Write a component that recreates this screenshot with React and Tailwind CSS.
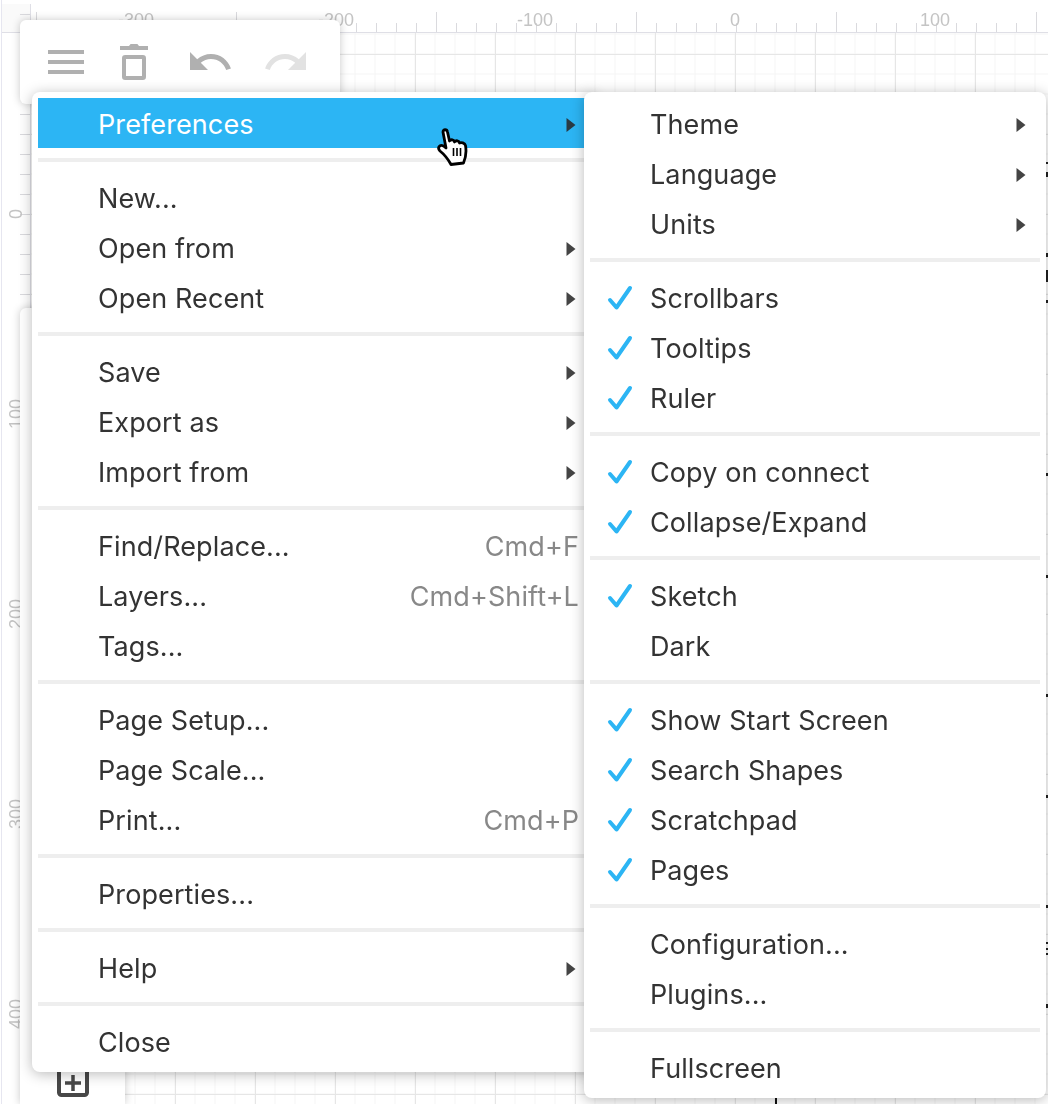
import React from "react";

const leftMenu = [
  [{ label: "Preferences", arrow: true, active: true }],
  [
    { label: "New..." },
    { label: "Open from", arrow: true },
    { label: "Open Recent", arrow: true },
  ],
  [
    { label: "Save", arrow: true },
    { label: "Export as", arrow: true },
    { label: "Import from", arrow: true },
  ],
  [
    { label: "Find/Replace...", shortcut: "Cmd+F" },
    { label: "Layers...", shortcut: "Cmd+Shift+L" },
    { label: "Tags..." },
  ],
  [
    { label: "Page Setup..." },
    { label: "Page Scale..." },
    { label: "Print...", shortcut: "Cmd+P" },
  ],
  [{ label: "Properties..." }],
  [{ label: "Help", arrow: true }],
  [{ label: "Close" }],
];

const rightMenu = [
  [
    { label: "Theme", arrow: true },
    { label: "Language", arrow: true },
    { label: "Units", arrow: true },
  ],
  [
    { label: "Scrollbars", checked: true },
    { label: "Tooltips", checked: true },
    { label: "Ruler", checked: true },
  ],
  [
    { label: "Copy on connect", checked: true },
    { label: "Collapse/Expand", checked: true },
  ],
  [{ label: "Sketch", checked: true }, { label: "Dark" }],
  [
    { label: "Show Start Screen", checked: true },
    { label: "Search Shapes", checked: true },
    { label: "Scratchpad", checked: true },
    { label: "Pages", checked: true },
  ],
  [{ label: "Configuration..." }, { label: "Plugins..." }],
  [{ label: "Fullscreen" }],
];

const range = (from, to, step) => {
  const out = [];
  for (let v = from; v <= to; v += step) out.push(v);
  return out;
};

// rulers and grid behind everything
const Canvas = () => (
  <svg className="absolute inset-0 blur-[0.4px]" width="1048" height="1104">
    {range(35, 1048, 20).map((x) => (
      <line key={"vm" + x} x1={x} x2={x} y1="32" y2="1104" stroke="#f5f5f5" />
    ))}
    {range(34, 1104, 20).map((y) => (
      <line key={"hm" + y} x1="30" x2="1048" y1={y} y2={y} stroke="#f5f5f5" />
    ))}
    {range(95, 1048, 80).map((x) => (
      <line key={"vj" + x} x1={x + 0.5} x2={x + 0.5} y1="32" y2="1104" stroke="#e6e6e6" />
    ))}
    {range(54, 1104, 80).map((y) => (
      <line key={"hj" + y} x1="30" x2="1048" y1={y + 0.5} y2={y + 0.5} stroke="#e6e6e6" />
    ))}
    <rect x="2" y="4" width="28" height="28" fill="#fafafa" />
    <line x1="1.5" x2="1.5" y1="0" y2="1104" stroke="#e6e6f0" />
    <line x1="30.5" x2="30.5" y1="4" y2="1104" stroke="#dfdfe6" />
    <line x1="2" x2="1048" y1="32.5" y2="32.5" stroke="#dfdfe6" />
    {range(36, 1048, 20).map((x) => (
      <line
        key={"tx" + x}
        x1={x + 0.5}
        x2={x + 0.5}
        y1={(x - 36) % 200 === 0 ? 12 : 23}
        y2="32"
        stroke="#dadade"
      />
    ))}
    {range(14, 1104, 20).map((y) => (
      <line key={"ty" + y} x1="20" x2="30" y1={y + 0.5} y2={y + 0.5} stroke="#dadade" />
    ))}
    <g className="blur-[0.6px]" fontSize="18" fill="#c4c4c4" fontFamily="Liberation Sans, sans-serif">
      {[
        [136, "-300"],
        [336, "-200"],
        [535, "-100"],
        [735, "0"],
        [935, "100"],
      ].map(([x, t]) => (
        <text key={t} x={x} y="26" textAnchor="middle">
          {t}
        </text>
      ))}
      {[
        [214, "0"],
        [414, "100"],
        [614, "200"],
        [814, "300"],
        [1014, "400"],
      ].map(([y, t]) => (
        <text key={"v" + t} transform={`translate(22 ${y}) rotate(-90)`} textAnchor="middle">
          {t}
        </text>
      ))}
    </g>
    {[
      [162, 2],
      [172, 5],
      [253, 4],
      [270, 12],
      [300, 3],
      [473, 3],
      [575, 3],
      [694, 3],
      [795, 3],
      [905, 3],
      [942, 2],
      [948, 2],
      [953, 2],
      [1004, 4],
    ].map(([y, h]) => (
      <rect key={"e" + y} x="1046" y={y} width="2" height={h} fill="#222" />
    ))}
    <rect x="775" y="1098" width="2" height="6" fill="#111" />
  </svg>
);

const ToolIcon = ({ color, className, children }) => (
  <svg className={className} width="48" height="48" viewBox="0 0 24 24" fill={color}>
    {children}
  </svg>
);

const Toolbar = () => (
  <div className="absolute left-[20px] top-[20px] flex h-[84px] w-[320px] items-start rounded-md bg-white pl-[22px] pt-[18px] shadow-[0_0_8px_rgba(0,0,0,0.22)]">
    <ToolIcon color="#b0b0b0">
      <path d="M3 18h18v-2H3v2zm0-5h18v-2H3v2zm0-7v2h18V6H3z" />
    </ToolIcon>
    <ToolIcon color="#b0b0b0" className="ml-[20px]">
      <path d="M5 4h4.5l.8-1h3.4l.8 1H19v2H5z" />
      <rect x="7" y="9.5" width="10" height="10.5" rx="0.6" fill="none" stroke="#b0b0b0" strokeWidth="2" />
    </ToolIcon>
    <ToolIcon color="#b0b0b0" className="ml-[28px]">
      <path d="M12.5 8c-2.65 0-5.05.99-6.9 2.6L2 7v9h9l-3.62-3.62c1.39-1.16 3.16-1.88 5.12-1.88 3.54 0 6.55 2.31 7.6 5.5l2.37-.78C21.08 11.03 17.15 8 12.5 8z" />
    </ToolIcon>
    <ToolIcon color="#e2e2e2" className="ml-[28px]">
      <path d="M18.4 10.6C16.55 8.99 14.15 8 11.5 8c-4.65 0-8.58 3.03-9.96 7.22L3.9 16c1.05-3.19 4.05-5.5 7.6-5.5 1.95 0 3.73.72 5.12 1.88L13 16h9V7l-3.6 3.6z" />
    </ToolIcon>
  </div>
);

const Sidebar = () => (
  <div className="absolute left-[20px] top-[308px] flex h-[796px] w-[105px] flex-col items-center justify-end rounded-t-md bg-white pb-[7px] shadow-[0_0_8px_rgba(0,0,0,0.22)]">
    <svg width="32" height="36" viewBox="0 0 32 36" fill="none" stroke="#484848" strokeWidth="4">
      <rect x="2" y="2" width="28" height="32" rx="2.5" />
      <path d="M16 14v16M8 22h16" strokeWidth="3.5" />
    </svg>
  </div>
);

const Check = () => (
  <svg className="mt-[1px]" width="28" height="28" viewBox="0 0 28 28" fill="none">
    <path
      d="M4 16l6.5 7.5L24 4"
      stroke="#2cb5f4"
      strokeWidth="4"
      strokeLinecap="round"
      strokeLinejoin="round"
    />
  </svg>
);

const Arrow = ({ active }) => (
  <svg className="ml-auto mr-[14px] mt-[4px]" width="10" height="14" viewBox="0 0 10 14">
    <path d="M0.5 0L9.5 7L0.5 14z" fill={active ? "#2a3a44" : "#444"} />
  </svg>
);

const MenuItem = ({ item }) => (
  <div
    className={
      "flex h-[50px] items-center whitespace-nowrap pl-[16px] " +
      (item.active ? "bg-[#2cb5f4] text-white" : "text-[#333]")
    }
  >
    <div className="w-[44px] shrink-0">{item.checked && <Check />}</div>
    <span className="pt-[4px]">{item.label}</span>
    {item.shortcut && (
      <span className="ml-auto mr-[11px] pt-[4px] text-[#888]">{item.shortcut}</span>
    )}
    {item.arrow && <Arrow active={item.active} />}
  </div>
);

const Menu = ({ groups, className }) => (
  <div
    className={
      "absolute rounded-lg bg-white p-[6px] text-[27px] leading-[46px] tracking-[0.1px] shadow-[0_2px_14px_rgba(0,0,0,0.28)] " +
      className
    }
  >
    {groups.map((group, i) => (
      <div key={i}>
        {i > 0 && <div className="my-[10px] h-[4px] bg-[#eeeeee]" />}
        {group.map((item) => (
          <MenuItem key={item.label} item={item} />
        ))}
      </div>
    ))}
  </div>
);

const HandCursor = () => (
  <svg className="absolute left-[436px] top-[127px]" width="34" height="39" viewBox="0 0 34 39">
    <path
      d="M7 5C7 2 11 2 11.5 5L13.5 14C15 12 18 12.5 18.5 15C20 13 23 13.5 23.5 16C25 15 29 16 29.5 18.5C30.5 24 30 30 27.5 36L15 37.5C12.5 33 9 28 4 24C1 21 3.5 17 7.5 19L10 21z"
      fill="#fff"
      stroke="#000"
      strokeWidth="2.8"
      strokeLinejoin="round"
    />
    <path d="M17.5 21v8M21 21v8M24.5 21v8" stroke="#000" strokeWidth="1.6" />
  </svg>
);

const App = () => {
  return (
    <div className="relative h-[1104px] w-[1048px] overflow-hidden bg-white font-['Inter',sans-serif]">
      <Canvas />
      <Toolbar />
      <Sidebar />
      <Menu groups={leftMenu} className="left-[32px] top-[92px] w-[564px]" />
      <Menu groups={rightMenu} className="left-[584px] top-[92px] w-[462px]" />
      <HandCursor />
    </div>
  );
};

export default App;
